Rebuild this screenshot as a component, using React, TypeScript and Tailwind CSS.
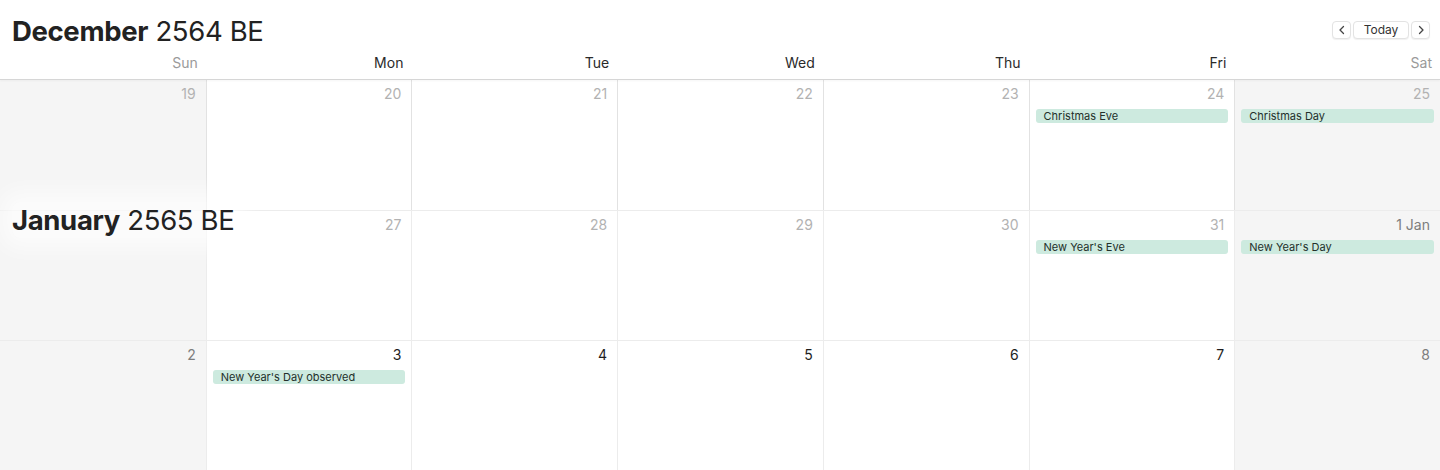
import React from "react";

type Ev = string;
type Cell = { label: string; tone: "past" | "weekendNow" | "now"; events?: Ev[] };

const rows: Cell[][] = [
  [
    { label: "19", tone: "past" },
    { label: "20", tone: "past" },
    { label: "21", tone: "past" },
    { label: "22", tone: "past" },
    { label: "23", tone: "past" },
    { label: "24", tone: "past", events: ["Christmas Eve"] },
    { label: "25", tone: "past", events: ["Christmas Day"] },
  ],
  [
    { label: "", tone: "past" },
    { label: "27", tone: "past" },
    { label: "28", tone: "past" },
    { label: "29", tone: "past" },
    { label: "30", tone: "past" },
    { label: "31", tone: "past", events: ["New Year's Eve"] },
    { label: "1 Jan", tone: "weekendNow", events: ["New Year's Day"] },
  ],
  [
    { label: "2", tone: "weekendNow" },
    { label: "3", tone: "now", events: ["New Year's Day observed"] },
    { label: "4", tone: "now" },
    { label: "5", tone: "now" },
    { label: "6", tone: "now" },
    { label: "7", tone: "now" },
    { label: "8", tone: "weekendNow" },
  ],
];

const days = ["Sun", "Mon", "Tue", "Wed", "Thu", "Fri", "Sat"];

export default function App() {
  return (
    <div className="relative w-[1440px] h-[470px] overflow-hidden bg-white font-['Inter','Liberation_Sans',sans-serif] text-[#222]">
      <div className="h-[80px] border-b border-[#d6d6d6] flex flex-col shadow-[0_1px_2px_rgba(0,0,0,0.04)] relative z-10 bg-white">
        <div className="h-[53px] flex items-start justify-between pl-3 pr-[10px]">
          <div className="mt-[13px] text-[27.5px] leading-[36px] tracking-[-0.35px] rounded-lg bg-white shadow-[0_0_18px_14px_rgba(255,255,255,0.9)]">
            <span className="font-bold">December</span>
            <span className="font-normal"> 2564 BE</span>
          </div>
          <div className="mt-[21px] flex items-center gap-[2px] text-[12px] text-[#333]">
            <button className="w-[19px] h-[18px] flex items-center justify-center rounded-[4px] border border-[#e3e3e3] bg-white shadow-[0_1px_1px_rgba(0,0,0,0.06)]">
              <svg width="8" height="10" viewBox="0 0 8 10" fill="none" stroke="#444" strokeWidth="1.3" strokeLinecap="round" strokeLinejoin="round">
                <path d="M5.5 1.5 L2 5 L5.5 8.5" />
              </svg>
            </button>
            <button className="w-[56px] h-[18px] flex items-center justify-center rounded-[4px] border border-[#e3e3e3] bg-white shadow-[0_1px_1px_rgba(0,0,0,0.06)] leading-none">
              Today
            </button>
            <button className="w-[19px] h-[18px] flex items-center justify-center rounded-[4px] border border-[#e3e3e3] bg-white shadow-[0_1px_1px_rgba(0,0,0,0.06)]">
              <svg width="8" height="10" viewBox="0 0 8 10" fill="none" stroke="#444" strokeWidth="1.3" strokeLinecap="round" strokeLinejoin="round">
                <path d="M2.5 1.5 L6 5 L2.5 8.5" />
              </svg>
            </button>
          </div>
        </div>
        <div className="grid grid-cols-7 h-[20px]">
          {days.map((d, i) => (
            <div
              key={d}
              className={`text-right pr-2 text-[14px] leading-[20px] ${i === 0 || i === 6 ? "text-[#9a9a9a]" : "text-[#2a2a2a]"}`}
            >
              {d}
            </div>
          ))}
        </div>
      </div>

      <div className="grid grid-cols-7 grid-rows-3 h-[390px]">
        {rows.map((row, r) =>
          row.map((c, i) => {
            const weekend = i === 0 || i === 6;
            const color =
              c.tone === "past" ? "text-[#b2b2b2]" : c.tone === "weekendNow" ? "text-[#7d7d7d]" : "text-[#1e1e1e]";
            return (
              <div
                key={`${r}-${i}`}
                className={`flex flex-col ${weekend ? "bg-[#f5f5f5]" : "bg-white"} ${i > 0 ? "border-l border-[#e2e2e2]" : ""} ${r > 0 ? "border-t border-[#ececec]" : ""}`}
              >
                <div className={`text-right pr-[10px] pt-[5px] h-[24px] text-[14px] leading-[18px] ${color}`}>{c.label}</div>
                {c.events?.map((e) => (
                  <div
                    key={e}
                    className="mx-[6px] mt-[5px] h-[14px] rounded-[3px] bg-[#cdeadf] pl-2 text-[11px] leading-[14px] text-[#23302b] whitespace-nowrap overflow-hidden"
                  >
                    {e}
                  </div>
                ))}
              </div>
            );
          })
        )}
      </div>

      <div className="absolute left-3 top-[202px] text-[27.5px] leading-[36px] tracking-[-0.35px] bg-white/60 shadow-[0_0_20px_12px_rgba(255,255,255,0.6)] rounded-lg">
        <span className="font-bold">January</span>
        <span className="font-normal"> 2565 BE</span>
      </div>
    </div>
  );
}
